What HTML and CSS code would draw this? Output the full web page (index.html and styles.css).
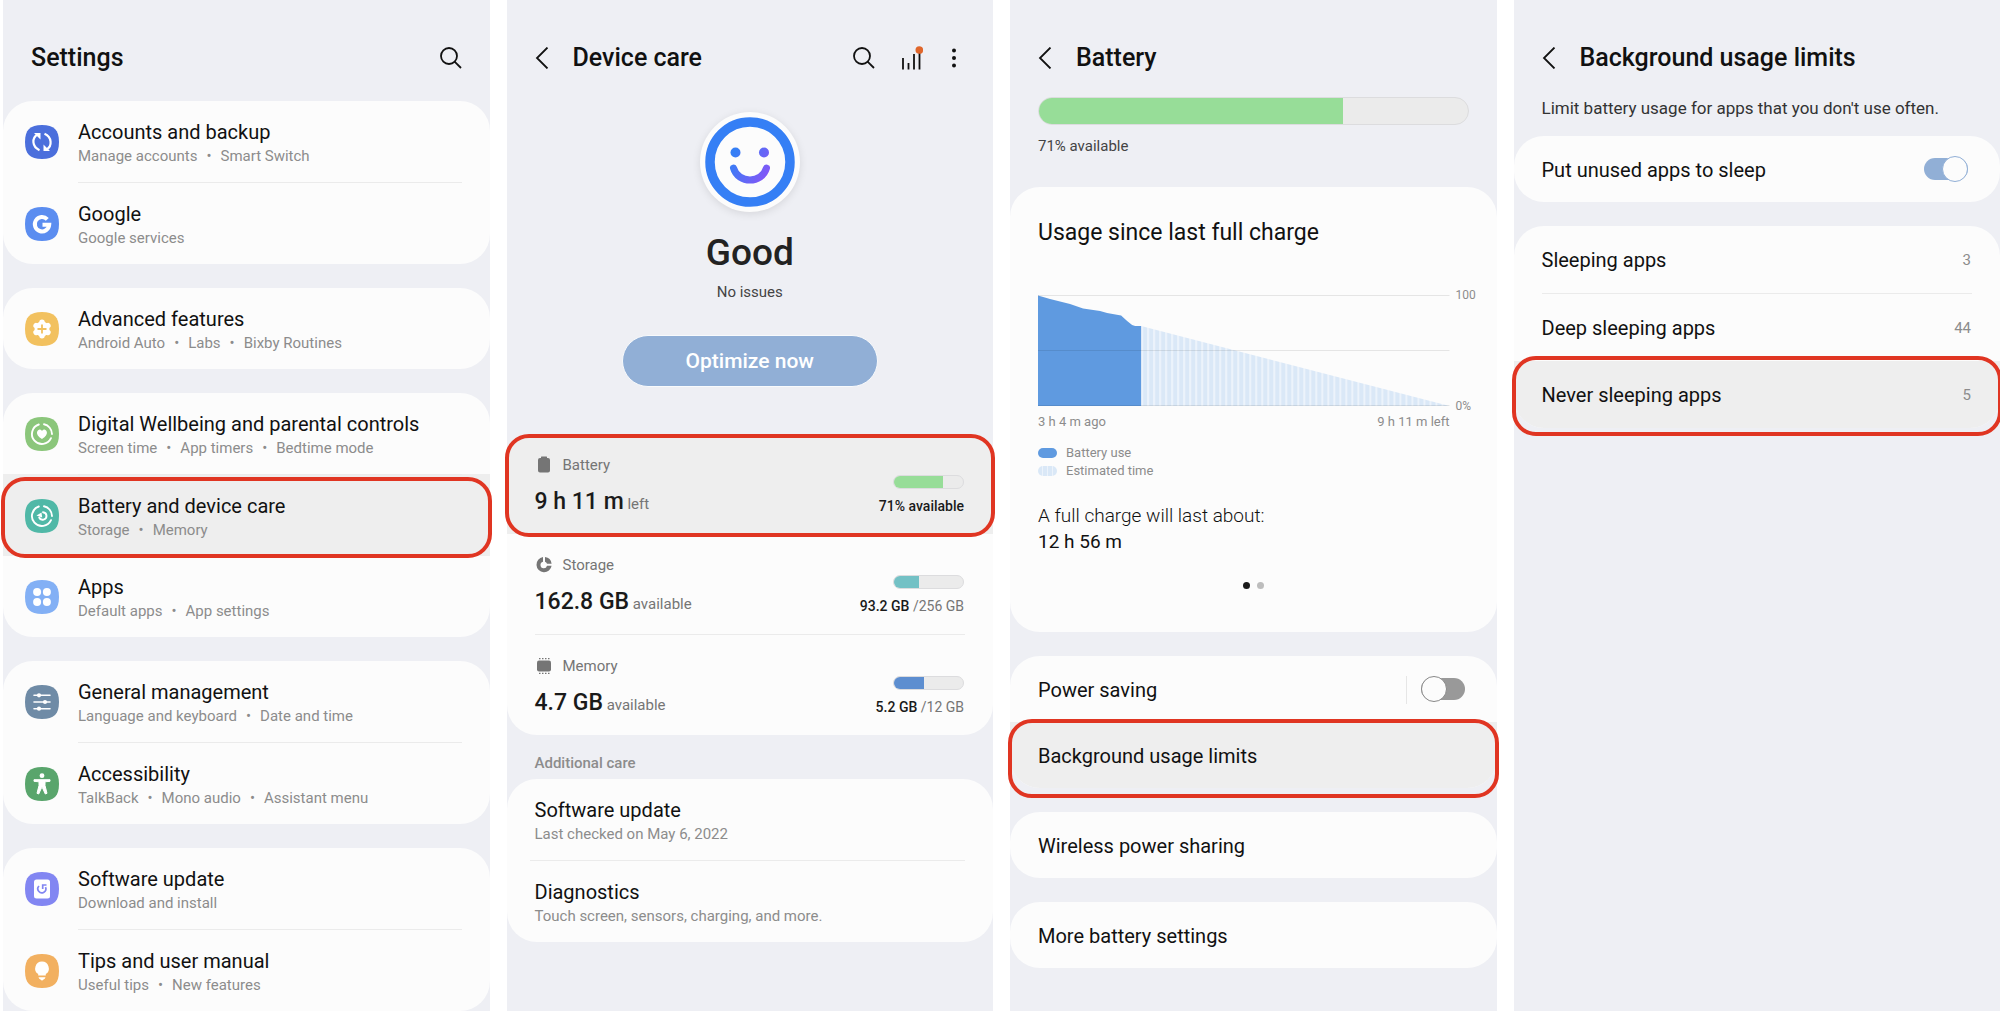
FILE: index.html
```html
<!DOCTYPE html>
<html lang="en">
<head>
<meta charset="utf-8">
<meta name="viewport" content="width=device-width, initial-scale=1">
<title>Never sleeping apps</title>
<link rel="stylesheet" href="styles.css">
</head>
<body>
<main class="steps">

  <section class="screen">
    <header class="bar">
      <h1 class="bar-title">Settings</h1>
      <div class="bar-actions">
        <button class="icon-button" type="button" aria-label="Search"><svg width="22" height="22" viewBox="0 0 22 22"><circle cx="9" cy="9" r="8" /><path d="M14.6 14.6 21 21" /></svg></button>
      </div>
    </header>
    <div class="groups groups-main">
      <ul class="card icon-rows">
        <li><a class="row" href="#">
          <svg class="app-icon" viewBox="0 0 34 34"><path fill="#4b6fdc" d="M17 0C29 0 34 5 34 17S29 34 17 34 0 29 0 17 5 0 17 0Z" /><g fill="none" stroke="#fff" stroke-width="2.200"><path d="M14.500 25.200C7 22 6.500 13 12.500 9.500" /><path d="M19.500 8.800C27 12 27.500 21 21.500 24.500" /></g><path fill="#fff" d="M9 8H15.500V14.500ZM25 26H18.500V19.500Z" /></svg>
          <span class="row-text"><span class="row-title">Accounts and backup</span><span class="row-sub"><span>Manage accounts</span><span>Smart Switch</span></span></span></a></li>
        <li><a class="row" href="#">
          <svg class="app-icon" viewBox="0 0 34 34"><path fill="#5b8df0" d="M17 0C29 0 34 5 34 17S29 34 17 34 0 29 0 17 5 0 17 0Z" /><path fill="none" stroke="#fff" stroke-width="4" d="M22.300 12.300A7.200 7.200 0 1 0 24.200 17.800H17.500" /></svg>
          <span class="row-text"><span class="row-title">Google</span><span class="row-sub"><span>Google services</span></span></span></a></li>
      </ul>
      <ul class="card icon-rows">
        <li><a class="row" href="#">
          <svg class="app-icon" viewBox="0 0 34 34"><path fill="#f2c15f" d="M17 0C29 0 34 5 34 17S29 34 17 34 0 29 0 17 5 0 17 0Z" /><g fill="#fff"><circle cx="17" cy="17" r="7.500" /><g stroke="#fff" stroke-width="5.500" stroke-linecap="round"><path d="M17 10.200V23.800M11.100 13.600 22.900 20.400M22.900 13.600 11.100 20.400" /></g></g><path fill="none" stroke="#f2c15f" stroke-width="1.800" d="M17 12.500V21.500M12.500 17H21.500" /></svg>
          <span class="row-text"><span class="row-title">Advanced features</span><span class="row-sub"><span>Android Auto</span><span>Labs</span><span>Bixby Routines</span></span></span></a></li>
      </ul>
      <ul class="card icon-rows">
        <li><a class="row" href="#">
          <svg class="app-icon" viewBox="0 0 34 34"><path fill="#8bc67b" d="M17 0C29 0 34 5 34 17S29 34 17 34 0 29 0 17 5 0 17 0Z" /><g fill="none" stroke="#fff" stroke-width="1.900" stroke-linecap="round"><path d="M19 7.300A10 10 0 0 1 27 17" /><path d="M26 21.200A10 10 0 1 1 13.800 7.500" /></g><path fill="#fff" d="M17 22C9 17 12.500 12.500 15 12.500Q16.400 12.500 17 14 17.600 12.500 19 12.500C21.500 12.500 25 17 17 22Z" /></svg>
          <span class="row-text"><span class="row-title">Digital Wellbeing and parental controls</span><span class="row-sub"><span>Screen time</span><span>App timers</span><span>Bedtime mode</span></span></span></a></li>
        <li class="pressed pressed-middle"><a class="row" href="#">
          <svg class="app-icon" viewBox="0 0 34 34"><path fill="#50b8a7" d="M17 0C29 0 34 5 34 17S29 34 17 34 0 29 0 17 5 0 17 0Z" /><g fill="none" stroke="#fff" stroke-width="1.900" stroke-linecap="round"><path d="M19 7.300A10 10 0 0 1 27 17" /><path d="M26 21.200A10 10 0 1 1 13.800 7.500" /><path d="M18 13.200A3.800 3.800 0 1 1 14.200 18.500" /></g><path fill="#fff" d="M11.500 16.500 16.500 13.500 17.200 18.500Z" /></svg>
          <span class="row-text"><span class="row-title">Battery and device care</span><span class="row-sub"><span>Storage</span><span>Memory</span></span></span></a></li>
        <li><a class="row" href="#">
          <svg class="app-icon" viewBox="0 0 34 34"><path fill="#83b0f5" d="M17 0C29 0 34 5 34 17S29 34 17 34 0 29 0 17 5 0 17 0Z" /><g fill="#fff"><circle cx="12.100" cy="12.100" r="4" /><circle cx="21.900" cy="12.100" r="4" /><circle cx="12.100" cy="21.900" r="4" /><circle cx="21.900" cy="21.900" r="4" /></g></svg>
          <span class="row-text"><span class="row-title">Apps</span><span class="row-sub"><span>Default apps</span><span>App settings</span></span></span></a></li>
      </ul>
      <ul class="card icon-rows">
        <li><a class="row" href="#">
          <svg class="app-icon" viewBox="0 0 34 34"><path fill="#6f8ba6" d="M17 0C29 0 34 5 34 17S29 34 17 34 0 29 0 17 5 0 17 0Z" /><path fill="none" stroke="#fff" stroke-width="1.600" stroke-linecap="round" d="M9 10.300H25M9 17H25M9 23.700H25" /><g fill="#fff"><circle cx="14" cy="10.300" r="2.100" /><circle cx="20" cy="17" r="2.100" /><circle cx="14" cy="23.700" r="2.100" /></g></svg>
          <span class="row-text"><span class="row-title">General management</span><span class="row-sub"><span>Language and keyboard</span><span>Date and time</span></span></span></a></li>
        <li><a class="row" href="#">
          <svg class="app-icon" viewBox="0 0 34 34"><path fill="#59a56c" d="M17 0C29 0 34 5 34 17S29 34 17 34 0 29 0 17 5 0 17 0Z" /><circle cx="17" cy="8.700" r="2.400" fill="#fff" /><path fill="#fff" stroke="#fff" stroke-linejoin="round" d="M9 12.700H25V14.300L20 14.800V18.500L22 26.300 20.300 27 17.300 20.500H16.700L13.700 27 12 26.300 14 18.500V14.800L9 14.300Z" /></svg>
          <span class="row-text"><span class="row-title">Accessibility</span><span class="row-sub"><span>TalkBack</span><span>Mono audio</span><span>Assistant menu</span></span></span></a></li>
      </ul>
      <ul class="card icon-rows">
        <li><a class="row" href="#">
          <svg class="app-icon" viewBox="0 0 34 34"><path fill="#8286f2" d="M17 0C29 0 34 5 34 17S29 34 17 34 0 29 0 17 5 0 17 0Z" /><rect x="9" y="7.500" width="16" height="19" rx="2.500" fill="#fff" /><path fill="none" stroke="#8286f2" stroke-width="1.700" d="M14 14A4 4 0 1 0 20.500 15.200M21.500 13H17.700V17" /></svg>
          <span class="row-text"><span class="row-title">Software update</span><span class="row-sub"><span>Download and install</span></span></span></a></li>
        <li><a class="row" href="#">
          <svg class="app-icon" viewBox="0 0 34 34"><path fill="#f2b060" d="M17 0C29 0 34 5 34 17S29 34 17 34 0 29 0 17 5 0 17 0Z" /><path fill="#fff" d="M17 7.500A6.900 6.900 0 0 1 20.800 20.100V21.500H13.200V20.100A6.900 6.900 0 0 1 17 7.500ZM13.500 23.300H20.500Q20 25.200 18.500 25.600 17 27.400 15.500 25.600 14 25.200 13.500 23.300Z" /></svg>
          <span class="row-text"><span class="row-title">Tips and user manual</span><span class="row-sub"><span>Useful tips</span><span>New features</span></span></span></a></li>
      </ul>
    </div>
  </section>

  <section class="screen">
    <header class="bar">
      <button class="icon-button back" type="button" aria-label="Back"><svg width="14" height="22" viewBox="0 0 14 22"><path d="M12.500.500 2 11 12.500 21.500" /></svg></button>
      <h1 class="bar-title">Device care</h1>
      <div class="bar-actions">
        <button class="icon-button" type="button" aria-label="Search"><svg width="22" height="22" viewBox="0 0 22 22"><circle cx="9" cy="9" r="8" /><path d="M14.600 14.600 21 21" /></svg></button>
        <button class="icon-button" type="button" aria-label="Usage statistics"><svg width="22" height="24" viewBox="0 0 22 24"><path d="M2 12V23.500M7.500 17V23.500M13 8V23.500M18.500 5V23.500" /><circle class="alert-dot" cx="18.300" cy="4" r="3.800" /></svg></button>
        <button class="icon-button" type="button" aria-label="More options"><svg width="16" height="22" viewBox="0 0 16 22"><g class="solid"><circle cx="5" cy="3.500" r="2" /><circle cx="5" cy="11" r="2" /><circle cx="5" cy="18.500" r="2" /></g></svg></button>
      </div>
    </header>
    <div class="status">
      <svg class="face" viewBox="0 0 100 100">
        <defs><linearGradient id="smile" gradientUnits="userSpaceOnUse" x1="34" y1="42" x2="68" y2="62"><stop offset="0" stop-color="#357ff5" /><stop offset="1" stop-color="#8257f7" /></linearGradient></defs>
        <circle cx="50" cy="50" r="40" fill="none" stroke="#357ff5" stroke-width="9.500" />
        <circle cx="35.500" cy="40.500" r="5" fill="url(#smile)" /><circle cx="64" cy="40.500" r="5" fill="url(#smile)" />
        <path d="M33.500 56C38 72 62 72 66.500 56" fill="none" stroke="url(#smile)" stroke-width="7" stroke-linecap="round" />
      </svg>
      <p class="status-title">Good</p>
      <p class="status-note">No issues</p>
      <button class="optimize" type="button">Optimize now</button>
    </div>
    <ul class="card usage-rows">
      <li class="pressed pressed-first"><a class="usage" href="#">
        <span class="usage-main"><span class="usage-label"><svg width="18" height="18" viewBox="0 0 18 18"><path d="M6 1Q6 .500 6.500.500H11.500Q12 .500 12 1V2H13Q15 2 15 4V14.500Q15 16.500 13 16.500H5Q3 16.500 3 14.500V4Q3 2 5 2H6Z" /></svg>Battery</span><span class="usage-value"><strong>9 h 11 m</strong> left</span></span>
        <span class="usage-side"><span class="meter"><span class="meter-fill green" style="width:71%"></span></span><span class="usage-note"><strong>71% available</strong></span></span></a></li>
      <li><a class="usage" href="#">
        <span class="usage-main"><span class="usage-label"><svg width="18" height="18" viewBox="0 0 18 18"><path d="M8 1.100V5.700A3.300 3.300 0 1 0 12 9.700H16.600A7.600 7.600 0 1 1 8 1.100ZM10 1.100A7.600 7.600 0 0 1 16.600 7.700H12A3.300 3.300 0 0 0 10 5.700Z" /></svg>Storage</span><span class="usage-value"><strong>162.8 GB</strong> available</span></span>
        <span class="usage-side"><span class="meter"><span class="meter-fill teal" style="width:36.400%"></span></span><span class="usage-note"><strong>93.2 GB</strong> /256 GB</span></span></a></li>
      <li><a class="usage" href="#">
        <span class="usage-main"><span class="usage-label"><svg width="18" height="18" viewBox="0 0 18 18"><rect x="2" y="3.500" width="14" height="11" rx="2" /><path fill="none" stroke="#757575" stroke-width="1.200" stroke-dasharray="1.500 1.500" d="M4 1.600H14.500M4 16.400H14.500" /></svg>Memory</span><span class="usage-value"><strong>4.7 GB</strong> available</span></span>
        <span class="usage-side"><span class="meter"><span class="meter-fill blue" style="width:43.300%"></span></span><span class="usage-note"><strong>5.2 GB</strong> /12 GB</span></span></a></li>
    </ul>
    <h2 class="group-title">Additional care</h2>
    <ul class="card text-rows">
      <li><a class="row" href="#"><span class="row-text"><span class="row-title">Software update</span><span class="row-sub">Last checked on May 6, 2022</span></span></a></li>
      <li><a class="row" href="#"><span class="row-text"><span class="row-title">Diagnostics</span><span class="row-sub">Touch screen, sensors, charging, and more.</span></span></a></li>
    </ul>
  </section>

  <section class="screen">
    <header class="bar">
      <button class="icon-button back" type="button" aria-label="Back"><svg width="14" height="22" viewBox="0 0 14 22"><path d="M12.500.500 2 11 12.500 21.500" /></svg></button>
      <h1 class="bar-title">Battery</h1>
    </header>
    <div class="charge">
      <div class="meter meter-large"><span class="meter-fill green" style="width:71%"></span></div>
      <p class="charge-note">71% available</p>
    </div>
    <div class="groups">
      <section class="card usage-card">
        <h2 class="usage-title">Usage since last full charge</h2>
        <div class="chart">
          <div class="plot">
            <svg class="graph" viewBox="0 0 411 111" preserveAspectRatio="none" role="img" aria-label="Battery level over time">
              <defs><pattern id="stripes" width="6" height="6" patternUnits="userSpaceOnUse" x="103"><rect width="6" height="6" fill="#ecf3fb" /><rect x="2" width="4" height="6" fill="#dae8f7" /></pattern></defs>
              <path fill="url(#stripes)" d="M103 31 411 111H103Z" />
              <path fill="#5f9ae0" d="M0 .500 12 4 32 9 45 13.500 62 16 69 18 83 20.500 89 26 94 30 97 31H103V111H0Z" />
              <path fill="none" stroke="#000" stroke-opacity=".09" d="M0 .500H411M0 55.500H411M0 110.500H411" />
            </svg>
            <div class="times"><span>3 h 4 m ago</span><span>9 h 11 m left</span></div>
          </div>
          <div class="scale"><span>100</span><span>0%</span></div>
        </div>
        <ul class="legend">
          <li><svg width="19" height="10" viewBox="0 0 19 10"><rect width="19" height="10" rx="5" fill="#5f9ae0" /></svg>Battery use</li>
          <li><svg width="19" height="10" viewBox="0 0 19 10"><defs><pattern id="key-stripes" width="5" height="10" patternUnits="userSpaceOnUse"><rect width="5" height="10" fill="#ecf3fb" /><rect width="4" height="10" fill="#dae8f7" /></pattern></defs><rect width="19" height="10" rx="5" fill="url(#key-stripes)" /></svg>Estimated time</li>
        </ul>
        <p class="forecast">A full charge will last about:<strong>12 h 56 m</strong></p>
        <div class="pager"><span class="page current"></span><span class="page"></span></div>
      </section>
      <ul class="card plain-rows">
        <li class="plain"><label for="power-saving">Power saving</label><span class="toggle-cell"><input class="toggle" id="power-saving" type="checkbox"></span></li>
        <li class="pressed pressed-last"><a class="plain" href="#">Background usage limits</a></li>
      </ul>
      <ul class="card plain-rows"><li><a class="plain" href="#">Wireless power sharing</a></li></ul>
      <ul class="card plain-rows"><li><a class="plain" href="#">More battery settings</a></li></ul>
    </div>
  </section>

  <section class="screen">
    <header class="bar">
      <button class="icon-button back" type="button" aria-label="Back"><svg width="14" height="22" viewBox="0 0 14 22"><path d="M12.500.500 2 11 12.500 21.500" /></svg></button>
      <h1 class="bar-title">Background usage limits</h1>
    </header>
    <p class="intro">Limit battery usage for apps that you don't use often.</p>
    <div class="groups">
      <ul class="card plain-rows">
        <li class="plain"><label for="auto-sleep">Put unused apps to sleep</label><input class="toggle" id="auto-sleep" type="checkbox" checked></li>
      </ul>
      <ul class="card plain-rows divided">
        <li><a class="plain" href="#">Sleeping apps<span class="count">3</span></a></li>
        <li><a class="plain" href="#">Deep sleeping apps<span class="count">44</span></a></li>
        <li class="pressed pressed-last"><a class="plain" href="#">Never sleeping apps<span class="count">5</span></a></li>
      </ul>
    </div>
  </section>

</main>
</body>
</html>
```
FILE: styles.css
```css
*,
*::before,
*::after {
  box-sizing: border-box;
}

body {
  margin: 0;
  background: #fff;
  color: #111;
  font-family: Roboto, "Noto Sans", sans-serif;
  font-size: 20px;
  line-height: 26px;
}

h1,
h2,
p,
ul {
  margin: 0;
  padding: 0;
  font-weight: 400;
}

ul {
  list-style: none;
}

a {
  color: inherit;
  text-decoration: none;
}

button {
  padding: 0;
  border: 0;
  background: none;
  color: inherit;
  font: inherit;
}

svg {
  display: block;
  flex: none;
}

.steps {
  display: grid;
  grid-template-columns: repeat(4, minmax(0, 1fr));
  gap: 17px;
  min-height: 100vh;
  padding-left: 3px;
  overflow: clip;
}

.screen {
  background: #eeeff4;
}

/* Title bar */

.bar {
  display: flex;
  align-items: center;
  height: 96px;
  padding: 20px 28px 0;
}

.bar-title {
  font-size: 25px;
  font-weight: 500;
  line-height: 32px;
}

.bar-actions {
  display: flex;
  align-items: center;
  gap: 26px;
  margin-left: auto;
}

.back {
  margin-right: 24px;
}

.icon-button svg {
  margin-bottom: 1px;
  fill: none;
  stroke: #111;
  stroke-width: 1.8;
}

.icon-button .solid {
  fill: #111;
  stroke: none;
}

.icon-button .alert-dot {
  fill: #e0662b;
  stroke: none;
}

/* Cards and rows */

.groups {
  display: flex;
  flex-direction: column;
  gap: 24px;
}

.groups-main {
  padding-top: 5px;
}

.card {
  border-radius: 30px;
  background: #fcfcfc;
}

.row {
  display: flex;
  align-items: center;
  gap: 19px;
  padding: 0 28px 0 22px;
}

.app-icon {
  width: 34px;
  height: 34px;
}

.row-text {
  flex: 1;
  display: flex;
  flex-direction: column;
  padding: 18px 0 15px;
}

.row-sub {
  color: #8c8c8c;
  font-size: 15px;
  line-height: 22px;
}

.row-sub span + span::before {
  content: "•";
  margin: 0 9px;
}

.icon-rows li + li:not(.pressed + li)::before,
.text-rows li + li::before,
.usage-rows li:last-child::before,
.divided li:nth-child(2)::before {
  content: "";
  display: block;
  height: 1px;
  margin: 0 28px;
  background: #ebebeb;
}

.icon-rows li + li:not(.pressed + li)::before {
  margin-left: 75px;
}

.text-rows .row {
  padding-left: 28px;
}

.text-rows li + li::before {
  margin-left: 23px;
}

/* Pressed row with its red outline */

.pressed {
  position: relative;
  background: #eee;
}

.pressed::after {
  content: "";
  position: absolute;
  inset: 3px -2px -2px;
  border: 4px solid #e03522;
  border-radius: 24px;
  pointer-events: none;
}

.pressed-first {
  border-radius: 30px 30px 0 0;
}

.pressed-first::after {
  inset: 0 -2px -3px;
}

.pressed-last {
  border-radius: 0 0 30px 30px;
}

.pressed-last::after {
  inset: -3px -2px -10px;
}

.divided .pressed-last::after {
  inset: -5px -2px -8px;
}

/* Device care */

.status {
  display: flex;
  flex-direction: column;
  align-items: center;
  padding: 16px 28px 47px;
}

.face {
  width: 100px;
  height: 100px;
  border-radius: 50%;
  background: #fcfcfc;
  box-shadow: 0 2px 8px rgba(0, 0, 0, 0.1);
}

.status-title {
  margin-top: 19px;
  color: #222;
  font-size: 37px;
  font-weight: 500;
  line-height: 44px;
}

.status-note {
  margin-top: 6px;
  color: #444;
  font-size: 15px;
  line-height: 22px;
}

.optimize {
  width: 256px;
  height: 52px;
  margin-top: 32px;
  border: 1px solid #f8fafc;
  border-radius: 26px;
  background: #91afd6;
  color: #fff;
  font-size: 21px;
  font-weight: 500;
}

.usage {
  display: flex;
  justify-content: space-between;
  padding: 20px 29px 16px 28px;
  color: #757575;
  font-size: 15px;
}

.usage-main {
  display: flex;
  flex-direction: column;
  gap: 10px;
}

.usage-label {
  display: flex;
  align-items: center;
  gap: 10px;
  line-height: 22px;
}

.usage-label svg {
  fill: #757575;
}

.usage-value {
  line-height: 22px;
}

.usage-value strong {
  color: #1a1a1a;
  font-size: 23px;
  font-weight: 500;
  line-height: 32px;
}

.usage-side {
  display: flex;
  flex-direction: column;
  align-items: flex-end;
  gap: 7px;
  padding-top: 21px;
}

.usage-note {
  font-size: 14px;
  line-height: 20px;
}

.usage-note strong {
  color: #1a1a1a;
  font-weight: 500;
}

.meter {
  display: flex;
  width: 71px;
  height: 14px;
  overflow: hidden;
  border: 1px solid #dcdcde;
  border-radius: 14px;
  background: #ebebeb;
}

.meter-large {
  width: 100%;
  height: 28px;
}

.green {
  background: #97dd98;
}

.teal {
  background: #73c1c5;
}

.blue {
  background: #5d8ed0;
}

.group-title {
  padding: 17px 28px 5px;
  color: #8c8c8c;
  font-size: 15px;
  font-weight: 500;
  line-height: 22px;
}

/* Battery */

.charge {
  padding: 1px 28px 30px;
}

.charge-note {
  margin-top: 10px;
  color: #444;
  font-size: 15px;
  line-height: 22px;
}

.usage-card {
  padding: 31px 12px 43px 28px;
}

.usage-title {
  font-size: 23px;
  line-height: 30px;
}

.chart {
  display: flex;
  gap: 6px;
  margin-top: 39px;
  color: #8c8c8c;
}

.plot {
  flex: 1;
}

.graph {
  width: 100%;
  height: 111px;
  margin: 8px 0;
}

.times {
  display: flex;
  justify-content: space-between;
  font-size: 13px;
  line-height: 16px;
}

.scale {
  display: flex;
  flex-direction: column;
  justify-content: space-between;
  width: 29px;
  height: 127px;
  font-size: 12px;
  line-height: 16px;
}

.legend {
  margin-top: 14px;
  color: #8c8c8c;
  font-size: 13px;
  line-height: 18px;
}

.legend li {
  display: flex;
  align-items: center;
  gap: 9px;
}

.forecast {
  margin-top: 23px;
  font-size: 19px;
  font-weight: 300;
}

.forecast strong {
  display: block;
  font-weight: 400;
}

.pager {
  display: flex;
  justify-content: center;
  gap: 7px;
  margin-top: 27px;
  padding-right: 16px;
}

.page {
  width: 7px;
  height: 7px;
  border-radius: 50%;
  background: #bdbdbd;
}

.current {
  background: #1a1a1a;
}

.plain {
  display: flex;
  align-items: center;
  justify-content: space-between;
  min-height: 66px;
  padding: 2px 29px 0 28px;
}

.divided .plain {
  min-height: 67px;
  padding-top: 0;
}

.count {
  color: #8c8c8c;
  font-size: 15px;
}

.toggle-cell {
  padding-left: 14px;
  border-left: 1px solid #e6e6e6;
}

.toggle {
  appearance: none;
  display: block;
  position: relative;
  width: 44px;
  height: 26px;
  margin: 0 3px 2px 0;
}

.toggle::before {
  content: "";
  display: block;
  height: 22px;
  margin: 2px 0;
  border-radius: 11px;
  background: #999;
}

.toggle::after {
  content: "";
  position: absolute;
  top: 0;
  left: 0;
  width: 26px;
  height: 26px;
  border: 1px solid #888;
  border-radius: 50%;
  background: #fcfcfc;
}

.toggle:checked::before {
  background: #91afd6;
}

.toggle:checked::after {
  right: 0;
  left: auto;
  border-color: #91afd6;
}

/* Background usage limits */

.intro {
  padding: 0 28px 16px;
  color: #333;
  font-size: 17px;
  line-height: 24px;
}
```
